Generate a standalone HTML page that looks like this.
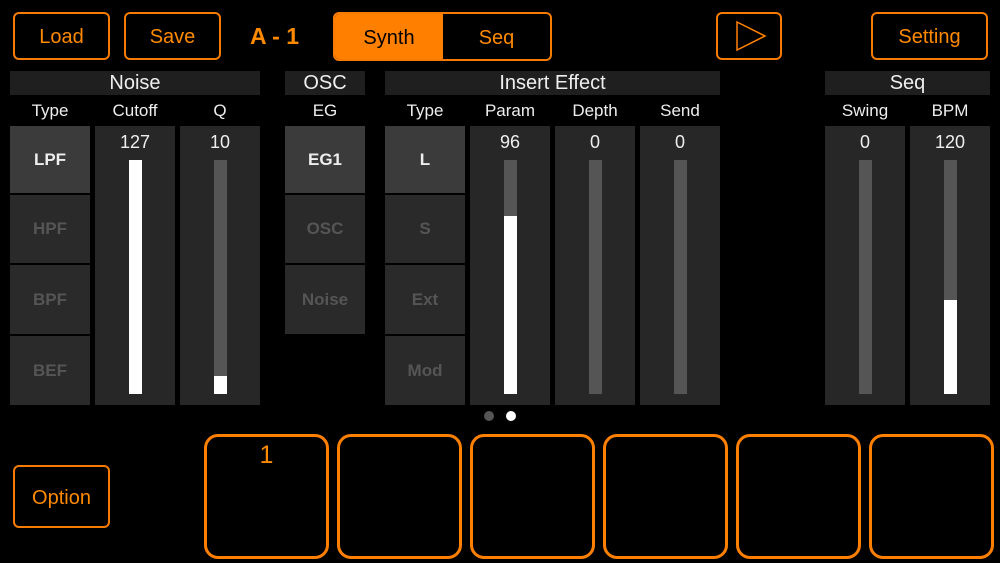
<!DOCTYPE html>
<html><head><style>
body{margin:0;width:1000px;height:563px;background:#000;overflow:hidden;position:relative;font-family:"Liberation Sans","DejaVu Sans",sans-serif}
div{position:absolute;box-sizing:border-box}
.btn{border:2px solid #f57c00;border-radius:6px;color:#ff8a00;font-size:20px;display:flex;align-items:center;justify-content:center;padding-top:3px}
.hdr{background:#1f1f1f;color:#eee;font-size:20px;text-align:center;top:71px;height:24px;line-height:25px}
.lbl{color:#eee;font-size:17px;text-align:center;top:100px;height:22px;line-height:22px;width:80px}
.tile{background:#272727;top:126px;height:279px;width:80px}
.val{color:#eee;font-size:18px;text-align:center;width:80px;top:131px;line-height:22px}
.trk{background:#555;width:13px;left:34px;top:34px;height:234px}
.fill{background:#fff;width:13px;left:34px;bottom:11px}
.tb{width:80px;background:#2a2a2a;color:#555;font-size:17px;font-weight:bold;display:flex;align-items:center;justify-content:center}
.tb.on{background:#3b3b3b;color:#eee}
.pad{border:3px solid #ff8000;border-radius:14px;top:434px;width:125px;height:125px;color:#ff8a00;font-size:25px;text-align:center;padding-top:4px}
</style></head><body>
<div class="btn" style="left:13px;top:12px;width:97px;height:48px">Load</div>
<div class="btn" style="left:124px;top:12px;width:97px;height:48px">Save</div>
<div style="left:250px;top:23px;color:#ff8a00;font-size:23px;font-weight:bold">A - 1</div>
<div style="left:333px;top:12px;width:219px;height:49px;border:2px solid #f57c00;border-radius:6px;overflow:hidden">
<div style="left:0;top:0;width:108px;height:45px;background:#ff8000;color:#000;font-size:20px;display:flex;align-items:center;justify-content:center;padding-top:3px">Synth</div>
<div style="left:108px;top:0;width:107px;height:45px;color:#ff8a00;font-size:20px;display:flex;align-items:center;justify-content:center;padding-top:3px">Seq</div>
</div>
<div class="btn" style="left:716px;top:12px;width:66px;height:48px;padding:0"></div>
<svg style="position:absolute;left:0;top:0" width="1000" height="100"><path d="M737 22 L765 36 L737 50 Z" fill="none" stroke="#ff8000" stroke-width="1.5"/></svg>
<div class="btn" style="left:871px;top:12px;width:117px;height:48px">Setting</div>

<div class="hdr" style="left:10px;width:250px">Noise</div>
<div class="hdr" style="left:285px;width:80px">OSC</div>
<div class="hdr" style="left:385px;width:335px">Insert Effect</div>
<div class="hdr" style="left:825px;width:165px">Seq</div>

<div class="lbl" style="left:10px">Type</div>
<div class="lbl" style="left:95px">Cutoff</div>
<div class="lbl" style="left:180px">Q</div>
<div class="lbl" style="left:285px">EG</div>
<div class="lbl" style="left:385px">Type</div>
<div class="lbl" style="left:470px">Param</div>
<div class="lbl" style="left:555px">Depth</div>
<div class="lbl" style="left:640px">Send</div>
<div class="lbl" style="left:825px">Swing</div>
<div class="lbl" style="left:910px">BPM</div>

<div class="tb on" style="left:10px;top:126px;height:67px">LPF</div>
<div class="tb" style="left:10px;top:195px;height:68px">HPF</div>
<div class="tb" style="left:10px;top:265px;height:69px">BPF</div>
<div class="tb" style="left:10px;top:336px;height:69px">BEF</div>

<div class="tb on" style="left:285px;top:126px;height:67px">EG1</div>
<div class="tb" style="left:285px;top:195px;height:68px">OSC</div>
<div class="tb" style="left:285px;top:265px;height:69px">Noise</div>

<div class="tb on" style="left:385px;top:126px;height:67px">L</div>
<div class="tb" style="left:385px;top:195px;height:68px">S</div>
<div class="tb" style="left:385px;top:265px;height:69px">Ext</div>
<div class="tb" style="left:385px;top:336px;height:69px">Mod</div>

<div class="tile" style="left:95px"><div class="val" style="top:5px">127</div><div class="trk"></div><div class="fill" style="height:234px"></div></div>
<div class="tile" style="left:180px"><div class="val" style="top:5px">10</div><div class="trk"></div><div class="fill" style="height:18px"></div></div>
<div class="tile" style="left:470px"><div class="val" style="top:5px">96</div><div class="trk"></div><div class="fill" style="height:178px"></div></div>
<div class="tile" style="left:555px"><div class="val" style="top:5px">0</div><div class="trk"></div></div>
<div class="tile" style="left:640px"><div class="val" style="top:5px">0</div><div class="trk"></div></div>
<div class="tile" style="left:825px"><div class="val" style="top:5px">0</div><div class="trk"></div></div>
<div class="tile" style="left:910px"><div class="val" style="top:5px">120</div><div class="trk"></div><div class="fill" style="height:94px"></div></div>

<div style="left:484px;top:411px;width:10px;height:10px;border-radius:50%;background:#555"></div>
<div style="left:506px;top:411px;width:10px;height:10px;border-radius:50%;background:#fff"></div>

<div class="btn" style="left:13px;top:465px;width:97px;height:63px">Option</div>

<div class="pad" style="left:204px">1</div>
<div class="pad" style="left:337px"></div>
<div class="pad" style="left:470px"></div>
<div class="pad" style="left:603px"></div>
<div class="pad" style="left:736px"></div>
<div class="pad" style="left:869px"></div>
</body></html>
